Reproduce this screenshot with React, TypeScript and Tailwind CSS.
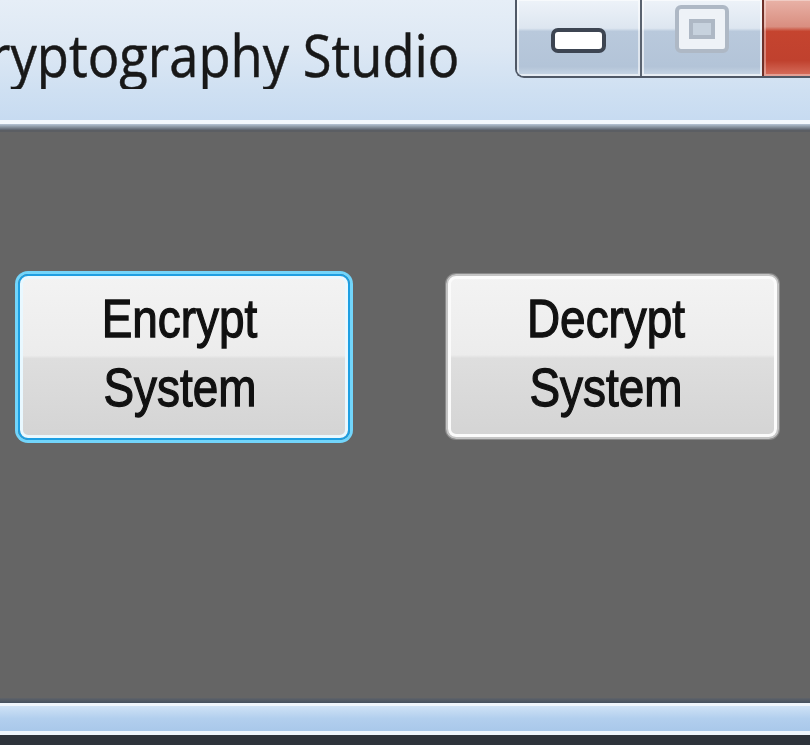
import React from "react";

const btnFace =
  "bg-[linear-gradient(to_bottom,#f3f3f3_0%,#ececec_49%,#dedede_51%,#d4d4d4_100%)]";

function CaptionButtons() {
  return (
    <div className="flex h-[79px] shrink-0 -mt-[1px] overflow-hidden rounded-bl-[9px] border-b-[2px] border-l-[2px] border-[#4f5866]">
      {/* minimize */}
      <div className="flex h-full w-[125px] items-center justify-center border-r-[2px] border-[#5a6370] bg-[linear-gradient(to_bottom,#eef3f9_0%,#dde6f0_38%,#b9c9dc_42%,#b3c4d8_88%,#c9d7e6_100%)] shadow-[inset_0_0_0_2px_rgba(255,255,255,0.55)]">
        <div className="mt-[6px] h-[25px] w-[55px] rounded-[7px] border-[4px] border-[#3d4552] bg-white" />
      </div>
      {/* maximize (disabled) */}
      <div className="flex h-full w-[122px] items-start justify-center border-r-[2px] border-[#6e3028] bg-[linear-gradient(to_bottom,#eef3f9_0%,#dde6f0_38%,#b9c9dc_42%,#b3c4d8_88%,#c9d7e6_100%)] shadow-[inset_0_0_0_2px_rgba(255,255,255,0.6)]">
        <div className="mt-[6px] flex h-[48px] w-[54px] items-center justify-center rounded-[6px] border-[4px] border-[#aeb8c5] bg-[#eef2f7]">
          <div className="h-[20px] w-[26px] border-[4px] border-[#aeb8c5] bg-[#c7d2de]" />
        </div>
      </div>
      {/* close */}
      <div className="h-full w-[90px] bg-[linear-gradient(to_bottom,#e9b3a8_0%,#d98e80_36%,#c5442f_42%,#c0412e_80%,#d7705f_100%)] shadow-[inset_0_0_0_2px_rgba(255,255,255,0.35)]" />
    </div>
  );
}

function WinButton({
  lines,
  focused,
}: {
  lines: [string, string];
  focused?: boolean;
}) {
  return (
    <button
      type="button"
      className={
        focused
          ? `flex h-[166px] w-[332px] shrink-0 flex-col items-center justify-center rounded-[10px] border-[2px] border-[#1d9fe2] pb-[8px] pr-[8px] shadow-[0_0_0_3px_#72d5fb,inset_0_0_0_3px_#e9f8ff] ${btnFace}`
          : `flex h-[165px] w-[333px] shrink-0 flex-col items-center justify-center rounded-[10px] border-[2px] border-[#c4c4c4] pb-[8px] pr-[12px] shadow-[0_0_0_1px_#8a8a8a,inset_0_0_0_3px_#fbfbfb] ${btnFace}`
      }
    >
      {lines.map((l) => (
        <span
          key={l}
          className="inline-block scale-x-[0.85] text-[54px] leading-[69px] text-[#111] [-webkit-text-stroke:1.3px_#111]"
          style={{ fontFamily: '"Liberation Sans", Arial, sans-serif' }}
        >
          {l}
        </span>
      ))}
    </button>
  );
}

export default function App() {
  return (
    <div className="flex h-[745px] w-[810px] flex-col overflow-hidden bg-[#2f343c]">
      {/* title bar */}
      <div className="flex h-[120px] shrink-0 items-start overflow-hidden bg-[linear-gradient(to_bottom,#e6eef7_0%,#dde8f4_40%,#cfe0f2_75%,#c7dbf1_100%)]">
        <div className="w-[515px] shrink-0 overflow-hidden pt-[19px]">
          <span
            className="ml-[-44px] block origin-left scale-x-[0.89] whitespace-nowrap text-[59px] leading-[70px] text-[#181818] [-webkit-text-stroke:0.5px_#181818]"
            style={{ fontFamily: '"Open Sans", "Noto Sans", sans-serif' }}
          >
            Cryptography Studio
          </span>
        </div>
        <CaptionButtons />
      </div>
      {/* top frame edge */}
      <div className="h-[4px] shrink-0 bg-[#f3f8fd]" />
      <div className="h-[6px] shrink-0 bg-[linear-gradient(to_bottom,#b7c6d6,#5b626c)]" />
      <div className="h-[2px] shrink-0 bg-[#5b5e63]" />
      {/* client area */}
      <div className="flex h-[566px] shrink-0 items-start gap-[96px] bg-[#656565] pl-[18px] pt-[142px]">
        <WinButton lines={["Encrypt", "System"]} focused />
        <WinButton lines={["Decrypt", "System"]} />
      </div>
      {/* bottom frame */}
      <div className="h-[5px] shrink-0 bg-[linear-gradient(to_bottom,#5f6369,#44505f)]" />
      <div className="h-[3px] shrink-0 bg-[#eef5fc]" />
      <div className="h-[25px] shrink-0 bg-[linear-gradient(to_bottom,#cfe2f6,#b2cfee_50%,#a9c8ea)]" />
      <div className="h-[4px] shrink-0 bg-[#eff6fd]" />
      <div className="flex-1 bg-[#2e333b]" />
    </div>
  );
}
